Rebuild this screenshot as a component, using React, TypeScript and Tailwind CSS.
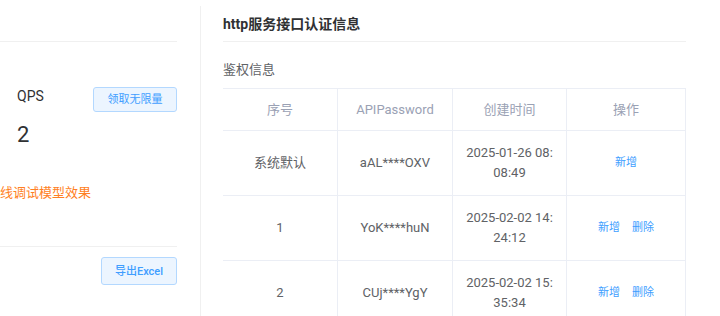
import React from "react";

const font = { fontFamily: "Roboto, 'Noto Sans CJK SC', sans-serif" };

const rows = [
  { no: "系统默认", pw: "aAL****OXV", time: "2025-01-26 08:08:49", del: false },
  { no: "1", pw: "YoK****huN", time: "2025-02-02 14:24:12", del: true },
  { no: "2", pw: "CUj****YgY", time: "2025-02-02 15:35:34", del: true },
];

export default function App() {
  return (
    <div className="w-[720px] h-[316px] overflow-hidden bg-white flex" style={font}>
      {/* Left panel */}
      <div className="w-[200px] shrink-0 pr-[23px]">
        <div className="h-[42px] border-b border-[#f0f0f0]" />
        <div className="h-[205px] border-b border-[#f0f0f0] pt-[44px]">
          <div className="flex justify-between items-start pl-[17px]">
            <div className="flex flex-col">
              <span className="text-[14px] leading-[20px] text-[#303133]">QPS</span>
              <span className="text-[22px] leading-[30px] mt-[14px] text-[#303133]">2</span>
            </div>
            <button className="mt-[1px] w-[84px] h-[25px] rounded-[3px] bg-[#ecf5ff] border border-[#b3d8ff] text-[#409eff] text-[11px] leading-none">
              领取无限量
            </button>
          </div>
          <div className="mt-[33px] text-[13px] leading-[20px] text-[#ff7f24] whitespace-nowrap">
            线调试模型效果
          </div>
        </div>
        <div className="flex justify-end mt-[10px]">
          <button className="w-[76px] h-[28px] rounded-[3px] bg-[#ecf5ff] border border-[#b3d8ff] text-[#409eff] text-[11px] font-medium leading-none">
            导出Excel
          </button>
        </div>
      </div>

      {/* Right panel */}
      <div className="mt-[6px] flex-1 border-l border-[#f0f0f0] pl-[22px]">
        <div className="w-[463px]">
          <div className="h-[36px] border-b border-[#f0f0f0] pt-[6px]">
            <span className="text-[14px] leading-[20px] font-bold text-[#303133]">http服务接口认证信息</span>
          </div>
          <div className="mt-[18px] text-[13px] leading-[20px] text-[#606266]">鉴权信息</div>
          <div className="mt-[8px] border-t border-[#ebeef5] grid grid-cols-[115px_115px_114px_119px]">
            {["序号", "APIPassword", "创建时间", "操作"].map((h) => (
              <div
                key={h}
                className="h-[42px] border-b border-r border-[#ebeef5] flex items-center justify-center text-[13px] leading-[20px] text-[#9aa1b4]"
              >
                {h}
              </div>
            ))}
            {rows.map((r) => (
              <React.Fragment key={r.pw}>
                <div className="h-[65px] border-b border-r border-[#ebeef5] flex items-center justify-center text-[13px] leading-[20px] text-[#606266]">
                  {r.no}
                </div>
                <div className="h-[65px] border-b border-r border-[#ebeef5] flex items-center justify-center text-[13px] leading-[20px] text-[#606266]">
                  {r.pw}
                </div>
                <div className="h-[65px] border-b border-r border-[#ebeef5] flex items-center justify-center px-[10px] text-[13px] leading-[20px] text-[#606266] text-center break-all">
                  {r.time}
                </div>
                <div className="h-[65px] border-b border-r border-[#ebeef5] flex items-center justify-center gap-[12px] text-[11px] leading-[20px] text-[#409eff]">
                  <span>新增</span>
                  {r.del && <span>删除</span>}
                </div>
              </React.Fragment>
            ))}
          </div>
        </div>
      </div>
    </div>
  );
}
